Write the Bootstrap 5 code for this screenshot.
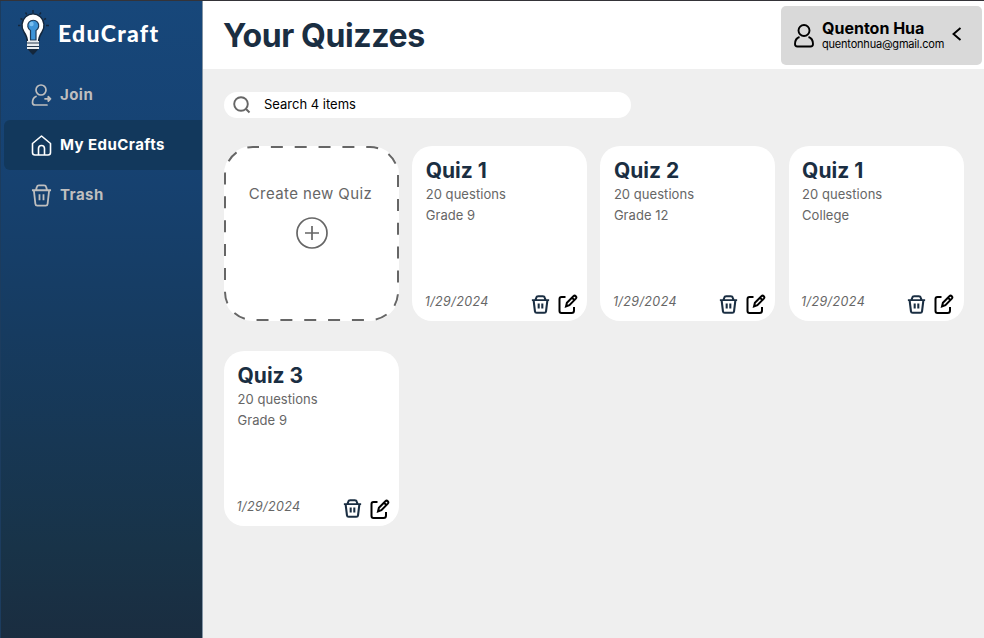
<!DOCTYPE html>
<html lang="en">
<head>
<meta charset="utf-8">
<meta name="viewport" content="width=device-width, initial-scale=1">
<title>EduCraft</title>
<link href="https://cdn.jsdelivr.net/npm/bootstrap@5.3.0/dist/css/bootstrap.min.css" rel="stylesheet">
<style>
body{font-family:Inter,"Liberation Sans",sans-serif;background:#efefef;color:#1a2e42;height:638px;overflow:hidden;border-top:1px solid #343338}
svg{display:block;flex:none;fill:none;stroke:currentColor}
.side{width:203px;background:linear-gradient(#17477a 0%,#164272 25%,#163b60 52%,#183348 86%,#1a2d40 100%);border-left:1px solid #1c3c5e;border-right:1px solid #8495a5}
.brand{height:69px;padding:8px 0 0 17px}
.brand-text{font:900 23px/26px Lato,sans-serif;letter-spacing:1.3px;margin:11px 0 0 9px}
.side .nav-link{height:50px;padding:0 0 0 27px;margin-left:3px;color:#bfbfbf;font-weight:700;font-size:15px;letter-spacing:.45px;border-radius:6px 0 0 6px;gap:8px}
.side .nav-link svg{width:21px}
.side .nav-link.active{background:#12385c;color:#fff}
.top{height:68px;padding:5px 2px 0 20px}
.top h1{font-size:32px;font-weight:700;line-height:40px;margin-top:10px;letter-spacing:-.4px}
.user{width:201px;height:59px;background:#d9d9d9;border-radius:5px;color:#000;padding-left:13px}
.user-name{font-size:16px;font-weight:700;line-height:17px;margin-top:-1px}
.user-mail{font-size:11px;line-height:14px;letter-spacing:-.2px}
.search{width:407px;height:26px;border-radius:13px;margin:23px 0 28px;padding-left:9px;color:#000;font-size:13px;gap:13px}
.page{padding-left:21px}
.tiles{display:grid;grid-template-columns:repeat(4,175px);column-gap:13.2px;row-gap:29.500px;grid-auto-rows:175px}
.tile{border-radius:20px;color:#666;font-size:13px}
.quiz{padding:12px 9.500px 7px 13.500px}
.quiz h2{font-size:21px;line-height:26px;font-weight:700;color:#1a2e42;margin:0}
.quiz p{line-height:21px;margin:0;letter-spacing:.05px}
.date{font-size:12.5px;font-style:italic;letter-spacing:.4px;margin:-3px 0 0 -1px}
.create{border-radius:28px;padding-top:37px}
.create-label{font-size:15px;line-height:22px;letter-spacing:.4px;margin:0 2px 11px 0}
</style>
<script src="https://cdn.jsdelivr.net/npm/bootstrap@5.3.0/dist/js/bootstrap.bundle.min.js"></script>
</head>
<body>
<svg width="0" height="0" class="position-absolute">
<symbol id="bin" viewBox="0 0 22 24" preserveAspectRatio="none"><path d="M1 6.5h20M3 6.5l1.600 14.200q.2 1.800 2 1.800h8.800q1.800 0 2-1.800L19 6.500M5.300 6l.8-2.800Q6.500 1.500 8.300 1.500h5.400q1.800 0 2.200 1.700l.8 2.800M8.900 10.800v6.200M13.100 10.800v6.200"/></symbol>
<symbol id="edit" viewBox="0 0 20 20"><path d="M7.500 3H3.500Q1.500 3 1.500 5v12q0 2 2 2h10q2.500 0 2.500-2.500V13"/><path d="M8 12.500l.9-3.800 6.500-6.500q1.200-1.100 2.400 0t0 2.400l-6.400 6.600zM14 3.700l2.500 2.400"/></symbol>
</svg>
<div class="d-flex h-100">
  <aside class="side flex-shrink-0">
    <div class="brand d-flex text-white">
      <svg width="31" height="46" viewBox="0 0 31 46">
        <path d="M15 1v3M7.500 3.500l1.300 2M23 3.500l-1.500 2M2.500 9.500l2 1M28 9.500l-2 1M0 16.500h2.500M28 16.500h3" stroke="#14273c" color="#14273c" stroke-width="1.400"/>
        <path d="M9.500 33.500Q9.500 28 6 23A11 11.500 0 1 1 24 23Q20.500 28 20.500 33.500z" fill="#fff" stroke="#14273c" stroke-width="1.400"/>
        <path d="M12.500 31V21.500a5.500 5.500 0 1 1 5.500 0V31z" fill="#3d94d8" stroke="#1d3b59" stroke-width="1.200"/>
        <circle cx="13.500" cy="15" r="2.200" fill="#79bff0" stroke="none"/>
        <path d="M9 32h12v8H9z" fill="#e8ecef" stroke="none"/>
        <path d="M9 34h12M9 37.500h12" stroke="#26384c" stroke-width="1"/>
        <path d="M9.500 40h11L17 44l-2 2-2-2z" fill="#14273c" stroke="none"/>
      </svg>
      <span class="brand-text">EduCraft</span>
    </div>
    <nav class="nav flex-column flex-nowrap">
      <a class="nav-link d-flex align-items-center" href="#">
        <svg width="20" height="22" viewBox="0 0 20 22" stroke-width="1.700" stroke-linecap="round" stroke-linejoin="round"><circle cx="9.500" cy="6" r="5"/><path d="M4.500 12.500Q1 14 1 18.500q0 2.500 2.500 2.500H15.500"/><path d="M13.500 14.800h5.500M16.800 12.500l2.200 2.300-2.200 2.300z"/></svg>
        <span>Join</span></a>
      <a class="nav-link active d-flex align-items-center" href="#">
        <svg width="20" height="21" viewBox="0 0 20 21" stroke-width="1.600" stroke-linejoin="round"><path d="M1 8.500L10 1l9 7.500V17.500q0 2.500-2.500 2.500h-13Q1 20 1 17.500zM7 20v-6.500q0-3 3-3t3 3V20"/></svg>
        <span>My EduCrafts</span></a>
      <a class="nav-link d-flex align-items-center" href="#">
        <svg height="23" stroke-width="1.900"><use href="#bin"/></svg>
        <span>Trash</span></a>
    </nav>
  </aside>
  <main class="flex-grow-1">
    <header class="top bg-white d-flex justify-content-between">
      <h1>Your Quizzes</h1>
      <div class="user d-flex align-items-center">
        <svg width="20" height="24" viewBox="0 0 20 24" stroke-width="1.900"><circle cx="10" cy="6.500" r="5.500"/><path d="M5.500 13Q1 14.500 1 20q0 2.500 2.500 2.500h13Q19 22.500 19 20q0-5.500-4.500-7"/></svg>
        <div class="ms-2"><div class="user-name">Quenton Hua</div><div class="user-mail">quentonhua@gmail.com</div></div>
        <svg class="ms-2 mb-1" width="10" height="14" viewBox="0 0 10 14" stroke-width="1.900"><path d="M8.500 1L1.500 7l7 6"/></svg>
      </div>
    </header>
    <div class="page">
      <div class="search bg-white d-flex align-items-center">
        <svg width="18" height="18" viewBox="0 0 18 18" color="#666" stroke-width="1.900"><circle cx="8" cy="8" r="6.800"/><path d="M13 13l3.500 3.500"/></svg>
        <span>Search 4 items</span>
      </div>
      <div class="tiles">
        <a class="tile create bg-white d-block text-decoration-none position-relative text-center" href="#">
          <svg class="position-absolute top-0 start-0" width="175" height="175"><rect x="1" y="1" width="173" height="173" rx="28" stroke-width="2" stroke-dasharray="12 11.850" stroke-dashoffset="6"/></svg>
          <div class="create-label">Create new Quiz</div>
          <svg class="mx-auto" width="34" height="34" viewBox="0 0 34 34" stroke-width="1.700"><circle cx="17" cy="17" r="15"/><path d="M17 10v14M10 17h14"/></svg>
        </a>
        <article class="tile quiz bg-white d-flex flex-column"><h2>Quiz 1</h2><p>20 questions</p><p>Grade 9</p>
          <div class="mt-auto d-flex align-items-center"><span class="date me-auto">1/29/2024</span><svg width="19" height="19" color="#1a2e42" stroke-width="2.400"><use href="#bin"/></svg><svg class="ms-2" width="20" height="20" color="#000" stroke-width="2"><use href="#edit"/></svg></div></article>
        <article class="tile quiz bg-white d-flex flex-column"><h2>Quiz 2</h2><p>20 questions</p><p>Grade 12</p>
          <div class="mt-auto d-flex align-items-center"><span class="date me-auto">1/29/2024</span><svg width="19" height="19" color="#1a2e42" stroke-width="2.400"><use href="#bin"/></svg><svg class="ms-2" width="20" height="20" color="#000" stroke-width="2"><use href="#edit"/></svg></div></article>
        <article class="tile quiz bg-white d-flex flex-column"><h2>Quiz 1</h2><p>20 questions</p><p>College</p>
          <div class="mt-auto d-flex align-items-center"><span class="date me-auto">1/29/2024</span><svg width="19" height="19" color="#1a2e42" stroke-width="2.400"><use href="#bin"/></svg><svg class="ms-2" width="20" height="20" color="#000" stroke-width="2"><use href="#edit"/></svg></div></article>
        <article class="tile quiz bg-white d-flex flex-column"><h2>Quiz 3</h2><p>20 questions</p><p>Grade 9</p>
          <div class="mt-auto d-flex align-items-center"><span class="date me-auto">1/29/2024</span><svg width="19" height="19" color="#1a2e42" stroke-width="2.400"><use href="#bin"/></svg><svg class="ms-2" width="20" height="20" color="#000" stroke-width="2"><use href="#edit"/></svg></div></article>
      </div>
    </div>
  </main>
</div>
</body>
</html>
